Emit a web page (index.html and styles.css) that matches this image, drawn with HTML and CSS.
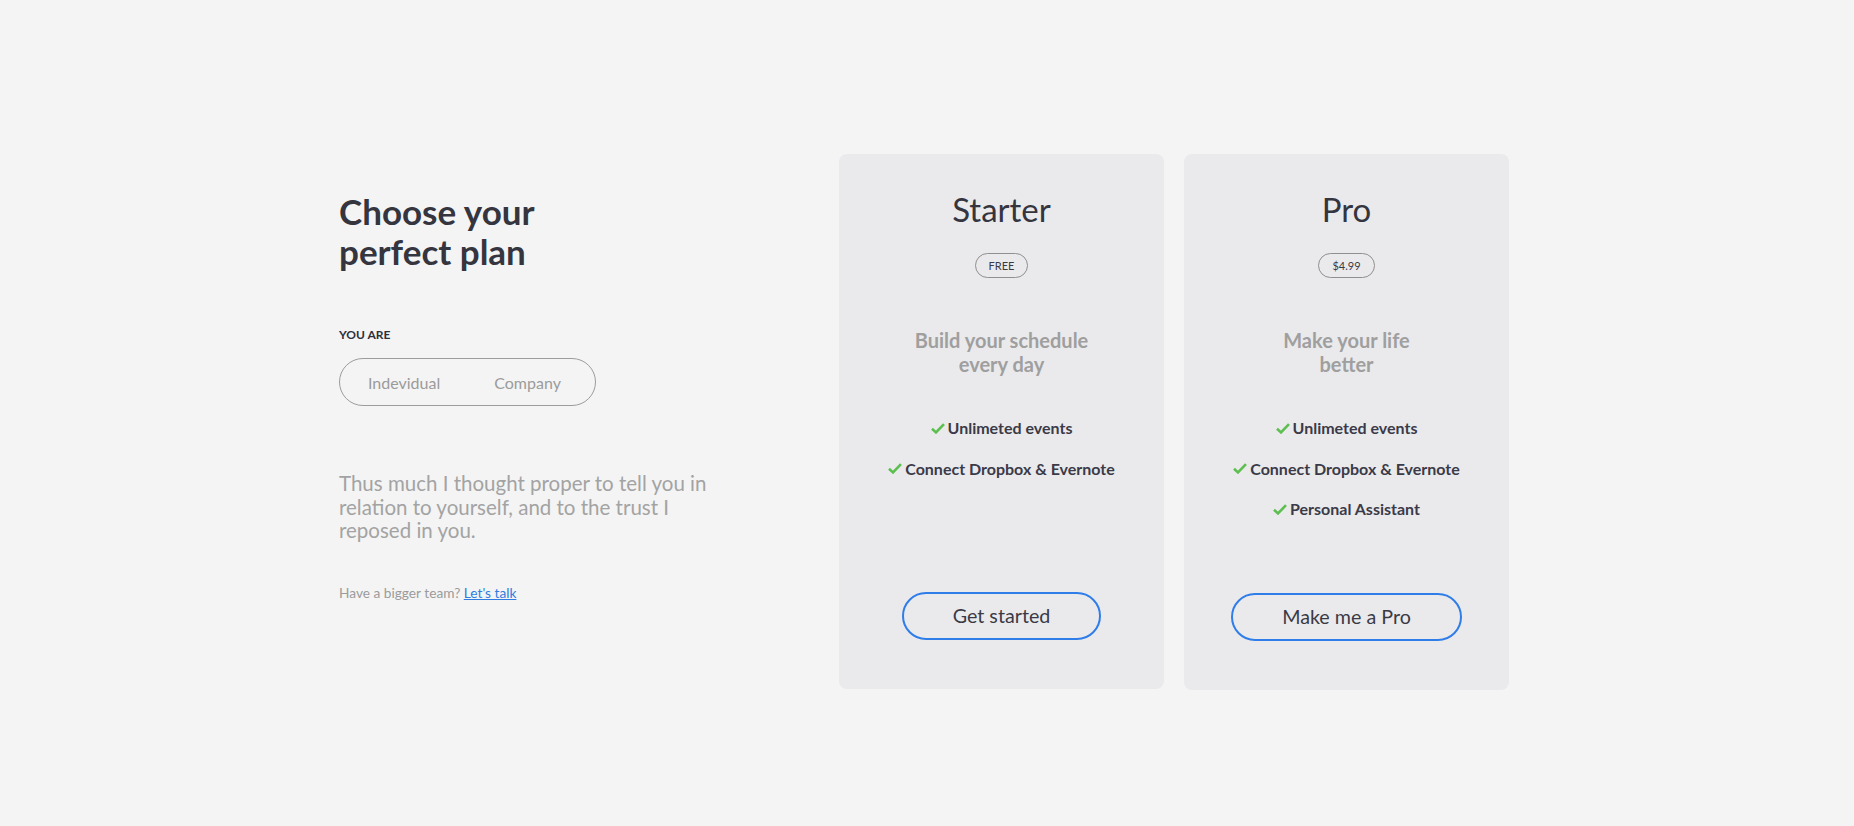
FILE: index.html
```html
<!DOCTYPE html>
<html lang="en">
<head>
<meta charset="utf-8">
<title>Choose your perfect plan</title>
<link rel="stylesheet" href="styles.css">
</head>
<body>
<main class="page">
  <section class="intro">
    <h1 class="intro-title">Choose your<br>perfect plan</h1>
    <div class="label">YOU ARE</div>
    <div class="toggle">
      <span class="toggle-option">Indevidual</span>
      <span class="toggle-option">Company</span>
    </div>
    <p class="intro-text">Thus much I thought proper to tell you in relation to yourself, and to the trust I reposed in you.</p>
    <p class="team">Have a bigger team? <a href="#" class="team-link">Let's talk</a></p>
  </section>
  <section class="plans">
    <article class="card">
      <h2 class="card-title">Starter</h2>
      <span class="badge">FREE</span>
      <p class="card-sub">Build your schedule<br>every day</p>
      <ul class="features">
        <li class="feature"><svg class="check" viewBox="0 0 14 11"><path d="M1 5.8 L5 9.4 L13 1.2" fill="none" stroke="#5cbf4f" stroke-width="2.6"/></svg>Unlimeted events</li>
        <li class="feature"><svg class="check" viewBox="0 0 14 11"><path d="M1 5.8 L5 9.4 L13 1.2" fill="none" stroke="#5cbf4f" stroke-width="2.6"/></svg>Connect Dropbox &amp; Evernote</li>
      </ul>
      <a href="#" class="btn">Get started</a>
    </article>
    <article class="card">
      <h2 class="card-title">Pro</h2>
      <span class="badge">$4.99</span>
      <p class="card-sub">Make your life<br>better</p>
      <ul class="features">
        <li class="feature"><svg class="check" viewBox="0 0 14 11"><path d="M1 5.8 L5 9.4 L13 1.2" fill="none" stroke="#5cbf4f" stroke-width="2.6"/></svg>Unlimeted events</li>
        <li class="feature"><svg class="check" viewBox="0 0 14 11"><path d="M1 5.8 L5 9.4 L13 1.2" fill="none" stroke="#5cbf4f" stroke-width="2.6"/></svg>Connect Dropbox &amp; Evernote</li>
        <li class="feature"><svg class="check" viewBox="0 0 14 11"><path d="M1 5.8 L5 9.4 L13 1.2" fill="none" stroke="#5cbf4f" stroke-width="2.6"/></svg>Personal Assistant</li>
      </ul>
      <a href="#" class="btn">Make me a Pro</a>
    </article>
  </section>
</main>
</body>
</html>
```
FILE: styles.css
```css
* { box-sizing: border-box; }
html, body { margin: 0; padding: 0; }
body {
  background: #f4f4f4;
  font-family: Lato, "Open Sans", "Liberation Sans", sans-serif;
  color: #35353f;
}
.page {
  width: 1170px;
  margin: 0 auto;
  padding: 154px 0 0 0;
  display: flex;
  position: relative;
  left: -3px;
}
.intro {
  width: 500px;
  padding-top: 37px;
}
.intro-title {
  margin: 0;
  font-size: 35px;
  line-height: 40px;
  font-weight: 700;
  color: #35353f;
}
.label {
  margin-top: 56px;
  font-size: 12px;
  line-height: 16px;
  font-weight: 700;
  color: #2f2f3a;
}
.toggle {
  margin-top: 15px;
  width: 257px;
  height: 48px;
  border: 1px solid #9c9c9c;
  border-radius: 24px;
  display: flex;
  align-items: center;
  padding-left: 28px;
  gap: 54px;
}
.toggle-option {
  font-size: 16px;
  color: #9b9b9b;
}
.intro-text {
  margin: 66px 0 0 0;
  width: 380px;
  font-size: 20.5px;
  line-height: 23.5px;
  color: #a3a3a3;
}
.team {
  margin: 41px 0 0 0;
  font-size: 13.7px;
  line-height: 18px;
  color: #9b9b9b;
}
.team-link {
  color: #2f7de1;
  text-decoration: underline;
}
.plans {
  display: flex;
  gap: 20px;
}
.card {
  width: 325px;
  height: 535px;
  background: #eaeaec;
  border-radius: 8px;
  display: flex;
  flex-direction: column;
  align-items: center;
  padding: 35px 0 49px 0;
}
.card:last-child { height: 536px; }
.card-title {
  margin: 0;
  font-size: 33px;
  line-height: 40px;
  font-weight: 400;
  color: #35353f;
}
.badge {
  margin-top: 24px;
  height: 25px;
  padding: 0 13px;
  border: 1px solid #8f8f8f;
  border-radius: 13px;
  font-size: 11px;
  line-height: 23px;
  color: #3a3a45;
}
.card-sub {
  margin: 50px 0 0 0;
  text-align: center;
  font-size: 20px;
  line-height: 24px;
  font-weight: 700;
  color: #a09f9f;
}
.features {
  list-style: none;
  margin: 42px 0 0 0;
  padding: 0;
  display: flex;
  flex-direction: column;
  align-items: center;
  gap: 20.5px;
}
.feature {
  display: flex;
  align-items: center;
  font-size: 16px;
  line-height: 20px;
  font-weight: 700;
  color: #3a3a48;
}
.check {
  width: 14px;
  height: 11px;
  margin-right: 3px;
}
.btn {
  margin-top: auto;
  height: 48px;
  padding: 0 49px;
  border: 2px solid #2f7de9;
  border-radius: 24px;
  font-size: 19.7px;
  line-height: 44px;
  color: #3a3a45;
  text-decoration: none;
}
```
